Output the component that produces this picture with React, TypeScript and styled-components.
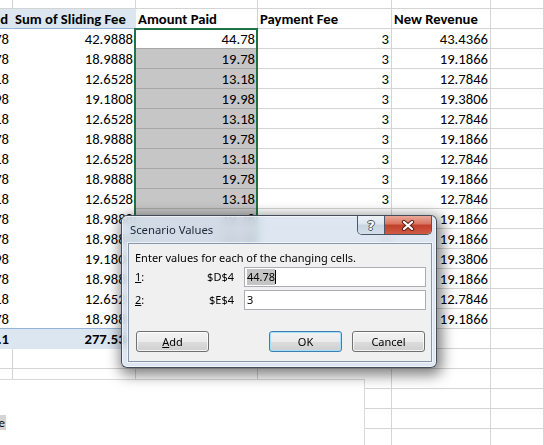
import styled, { createGlobalStyle, css } from "styled-components";

const GlobalStyle = createGlobalStyle`
  html, body {
    margin: 0;
    padding: 0;
    background: #fff;
    overflow: hidden;
  }
`;

const Viewport = styled.div`
  position: relative;
  width: 544px;
  height: 445px;
  overflow: hidden;
  background: #fff;
  font-family: Carlito, Lato, "Liberation Sans", sans-serif;
  font-size: 14.67px;
  color: #000;
`;

const Sheet = styled.div`
  display: flex;
  flex-direction: column;
`;

const Row = styled.div<{ $height?: number }>`
  display: grid;
  grid-template-columns: 13px 123px 122px 134px 99px 1fr;
  height: ${(p) => p.$height ?? 20}px;
`;

type CellKind = "grid" | "pivot" | "head" | "total" | "active" | "sel";

const cellKinds = {
  grid: css``,
  pivot: css`
    border-right-color: transparent;
    border-bottom-color: transparent;
  `,
  head: css`
    background: #dce6f1;
    border-right-color: #dce6f1;
    border-bottom-color: #95b3d7;
    font-weight: 700;
  `,
  total: css`
    background: #dce6f1;
    border-right-color: #dce6f1;
    border-bottom-color: #dce6f1;
    box-shadow: 0 -1px 0 #95b3d7;
    font-weight: 700;
  `,
  active: css`
    border-bottom-color: #a6a6a6;
  `,
  sel: css`
    background: #c6c6c6;
    border-right-color: #a6a6a6;
    border-bottom-color: #a6a6a6;
  `,
};

const Cell = styled.div<{ $kind?: CellKind; $right?: boolean; $bold?: boolean }>`
  box-sizing: border-box;
  min-width: 0;
  display: flex;
  align-items: flex-end;
  justify-content: ${(p) => (p.$right ? "flex-end" : "flex-start")};
  padding: 0 2px 1px;
  line-height: 15px;
  white-space: nowrap;
  overflow: clip;
  font-weight: ${(p) => (p.$bold ? 700 : 400)};
  border-right: 1px solid #d4d4d4;
  border-bottom: 1px solid #d4d4d4;
  ${(p) => cellKinds[p.$kind ?? "grid"]}
`;

/* first column is scrolled mostly out of view: only the tail of its text shows */
const EdgeCell = styled(Cell)<{ $tail?: number }>`
  padding-right: ${(p) => p.$tail ?? 3}px;
`;

const Selection = styled.div`
  position: absolute;
  left: 134px;
  top: 28px;
  width: 124px;
  height: 302px;
  box-sizing: border-box;
  border: 2px solid #217346;
  pointer-events: none;
`;

const ChartArea = styled.div`
  position: absolute;
  left: -30px;
  top: 379px;
  width: 395px;
  height: 100px;
  box-sizing: border-box;
  background: #fff;
  border: 1px solid #d9d9d9;
  padding-top: 35px;
`;

const FieldButton = styled.div`
  box-sizing: border-box;
  width: 35px;
  height: 15px;
  display: flex;
  align-items: center;
  justify-content: flex-end;
  padding-right: 1px;
  background: #d4d4d4;
  font-size: 13px;
  white-space: nowrap;
  overflow: clip;
`;

/* ---- Scenario Values dialog ---- */

const Dialog = styled.div`
  position: absolute;
  left: 121px;
  top: 215px;
  width: 316px;
  height: 153px;
  box-sizing: border-box;
  display: flex;
  flex-direction: column;
  padding: 0 4px 5px 6px;
  border: 1px solid rgba(30, 40, 52, 0.8);
  border-radius: 6px;
  background: rgba(214, 225, 238, 0.8);
  backdrop-filter: blur(5px);
  box-shadow: 2px 4px 14px 3px rgba(0, 0, 0, 0.5),
    inset 0 0 0 1px rgba(255, 255, 255, 0.6);
  font-family: "Noto Sans", "Open Sans", sans-serif;
  font-size: 11px;
  color: #000;
  z-index: 2;
`;

const TitleBar = styled.div`
  height: 27px;
  display: flex;
  align-items: flex-start;
`;

const Title = styled.div`
  margin: 6px 0 0 2px;
  line-height: 16px;
  font-size: 11.3px;
  color: #1b2636;
`;

const CaptionGroup = styled.div`
  margin-left: auto;
  display: flex;
  height: 18px;
  border: 1px solid #4b5868;
  border-top: none;
  border-radius: 0 0 5px 5px;
  overflow: hidden;
`;

const HelpButton = styled.div`
  width: 26px;
  display: flex;
  align-items: center;
  justify-content: center;
  border-right: 1px solid #4b5868;
  background: linear-gradient(#eef3f8 0%, #dce5ee 45%, #c8d4e1 50%, #d4dee9 100%);
  font-family: "DejaVu Sans", sans-serif;
  font-weight: 700;
  font-size: 13px;
  color: #fff;
  text-shadow: 1px 0 #4a5563, -1px 0 #4a5563, 0 1px #4a5563, 0 -1px #4a5563;
`;

const CloseButton = styled.div`
  width: 46px;
  display: flex;
  align-items: center;
  justify-content: center;
  background: linear-gradient(#eaa898 0%, #d8735f 45%, #c23f2a 50%, #d05b43 100%);
`;

const Client = styled.div`
  flex: 1;
  display: flex;
  flex-direction: column;
  padding: 6px 5px 0 6px;
  background: #f0f0f0;
  border: 1px solid #8898ab;
  box-shadow: 0 0 0 1px rgba(255, 255, 255, 0.6);
`;

const Prompt = styled.div`
  line-height: 16px;
`;

const Fields = styled.div`
  display: grid;
  grid-template-columns: 20px 69px 1fr;
  column-gap: 10px;
  row-gap: 3px;
  align-items: center;
  margin-top: 1px;
  line-height: 16px;
`;

const FieldRef = styled.div`
  text-align: right;
`;

const TextBox = styled.div`
  box-sizing: border-box;
  height: 20px;
  display: flex;
  align-items: center;
  padding-left: 2px;
  background: #fff;
  border: 1px solid #abadb3;
`;

const Selected = styled.span`
  background: #c4c4c4;
`;

const Caret = styled.span`
  width: 1px;
  height: 14px;
  background: #000;
`;

const ButtonRow = styled.div`
  display: flex;
  gap: 10px;
  margin-top: 21px;
  padding: 0 1px;
`;

const Button = styled.button<{ $default?: boolean; $push?: boolean }>`
  box-sizing: border-box;
  width: 73px;
  height: 21px;
  padding: 0;
  margin-left: ${(p) => (p.$push ? "auto" : "0")};
  border: 1px solid ${(p) => (p.$default ? "#3c7fb1" : "#707070")};
  border-radius: 3px;
  background: linear-gradient(#f2f2f2 0%, #ebebeb 50%, #dddddd 50%, #cfcfcf 100%);
  box-shadow: inset 0 0 0 1px
    ${(p) => (p.$default ? "#a6e0f8" : "rgba(255, 255, 255, 0.75)")};
  font-family: inherit;
  font-size: 11px;
  color: #000;
`;

const amounts = [
  44.78, 19.78, 13.18, 19.98, 13.18, 19.78, 13.18, 19.78, 13.18, 19.78, 19.78,
  19.98, 19.78, 13.18, 19.78,
];

const fmt = (n: number) => String(parseFloat(n.toFixed(4)));

const total = amounts.reduce((a, b) => a + b, 0);
const slidingTotal = amounts.reduce((a, b) => a + b * 0.96, 0);

const CloseGlyph = () => (
  <svg width="14" height="11" viewBox="0 0 14 11">
    <path d="M3 2 L11 9 M11 2 L3 9" stroke="#5a2219" strokeWidth="4.2" strokeLinecap="round" />
    <path d="M3 2 L11 9 M11 2 L3 9" stroke="#fff" strokeWidth="2.2" strokeLinecap="round" />
  </svg>
);

const EmptyRow = ({ height }: { height?: number }) => (
  <Row $height={height}>
    <Cell />
    <Cell />
    <Cell />
    <Cell />
    <Cell />
    <Cell />
  </Row>
);

export default function App() {
  return (
    <Viewport>
      <GlobalStyle />
      <Sheet>
        <EmptyRow height={9} />
        <Row>
          <EdgeCell $kind="head" $right $tail={4}>
            Sum of Amount Paid
          </EdgeCell>
          <Cell $kind="head">Sum of Sliding Fee</Cell>
          <Cell $bold>Amount Paid</Cell>
          <Cell $bold>Payment Fee</Cell>
          <Cell $bold>New Revenue</Cell>
          <Cell />
        </Row>
        {amounts.map((a, i) => (
          <Row key={i}>
            <EdgeCell $kind="pivot" $right>
              {fmt(a)}
            </EdgeCell>
            <Cell $kind="pivot" $right>
              {fmt(a * 0.96)}
            </Cell>
            <Cell $kind={i === 0 ? "active" : "sel"} $right>
              {fmt(a)}
            </Cell>
            <Cell $right>3</Cell>
            <Cell $right>{fmt(a * 0.97)}</Cell>
            <Cell />
          </Row>
        ))}
        <Row>
          <EdgeCell $kind="total" $right>
            {fmt(total)}
          </EdgeCell>
          <Cell $kind="total" $right>
            {fmt(slidingTotal)}
          </Cell>
          <Cell />
          <Cell />
          <Cell />
          <Cell />
        </Row>
        <EmptyRow />
        <EmptyRow />
        <EmptyRow />
        <EmptyRow />
        <EmptyRow />
      </Sheet>

      <Selection />

      <ChartArea>
        <FieldButton>Sum of New Revenue</FieldButton>
      </ChartArea>

      <Dialog>
        <TitleBar>
          <Title>Scenario Values</Title>
          <CaptionGroup>
            <HelpButton>?</HelpButton>
            <CloseButton>
              <CloseGlyph />
            </CloseButton>
          </CaptionGroup>
        </TitleBar>
        <Client>
          <Prompt>Enter values for each of the changing cells.</Prompt>
          <Fields>
            <div>
              <u>1</u>:
            </div>
            <FieldRef>$D$4</FieldRef>
            <TextBox>
              <Selected>44.78</Selected>
              <Caret />
            </TextBox>
            <div>
              <u>2</u>:
            </div>
            <FieldRef>$E$4</FieldRef>
            <TextBox>3</TextBox>
          </Fields>
          <ButtonRow>
            <Button>
              <u>A</u>dd
            </Button>
            <Button $default $push>
              OK
            </Button>
            <Button>Cancel</Button>
          </ButtonRow>
        </Client>
      </Dialog>
    </Viewport>
  );
}
